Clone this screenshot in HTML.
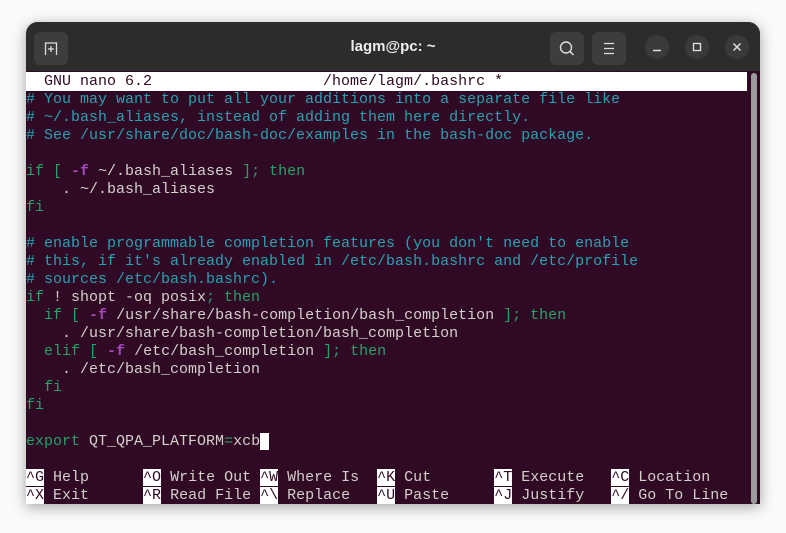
<!DOCTYPE html>
<html><head><style>
body{margin:0;width:786px;height:533px;background:#fafafa;overflow:hidden;position:relative;font-family:"Liberation Sans",sans-serif}
.win{position:absolute;left:26px;top:22px;width:734px;height:482px;background:#300a24;border-radius:12px 12px 0 0;box-shadow:0 3px 14px rgba(0,0,0,.35);overflow:hidden}
.tb{position:absolute;left:0;top:0;width:734px;height:49px;background:#2c2c2c}
.btn{position:absolute;top:10px;width:34px;height:33px;background:#3d3d3d;border-radius:6px}
.cir{position:absolute;top:13px;width:24px;height:24px;background:#3a3a3a;border-radius:50%}
.title{position:absolute;top:16px;left:0;width:734px;text-align:center;color:#eee;font-weight:bold;font-size:15px}
.term{position:absolute;left:0;top:51px;font-family:"Liberation Mono",monospace;font-size:15px;line-height:18px;color:#d3d0cc;white-space:pre}
.c{color:#2aa1b3}.k{color:#26a269}.p{color:#a347ba;font-weight:bold}
.hd{background:#fff;color:#300a24;width:721px;display:block;margin-top:-1px;padding-top:1px}
.kb{background:#fff;color:#300a24}
.sb{position:absolute;left:725px;top:51px;width:6px;height:431px;background:#9a9a9a;border-radius:3px}
</style></head><body>
<div class="win">
<div class="tb">
<div class="btn" style="left:8px"><svg width="34" height="33"><path d="M11.5 23V11h11v12" fill="none" stroke="#ddd" stroke-width="1.3"/><path d="M17 14v6M14 17h6" stroke="#ddd" stroke-width="1.3"/></svg></div>
<div class="title">lagm@pc: ~</div>
<div class="btn" style="left:524px"><svg width="34" height="33"><circle cx="16" cy="15.5" r="5.5" fill="none" stroke="#ddd" stroke-width="1.4"/><path d="M20 19.5l3.5 3.5" stroke="#ddd" stroke-width="1.5"/></svg></div>
<div class="btn" style="left:566px"><svg width="34" height="33"><path d="M12 11.5h10M12 16.5h10M12 21.5h10" stroke="#ddd" stroke-width="1.3"/></svg></div>
<div class="cir" style="left:619px"><svg width="24" height="24"><path d="M8 15.5h8" stroke="#ddd" stroke-width="1.5"/></svg></div>
<div class="cir" style="left:659px"><svg width="24" height="24"><rect x="8.5" y="8.5" width="7" height="7" fill="none" stroke="#ddd" stroke-width="1.4"/></svg></div>
<div class="cir" style="left:699px"><svg width="24" height="24"><path d="M8.5 8.5l7 7M15.5 8.5l-7 7" stroke="#ddd" stroke-width="1.5"/></svg></div>
</div>
<div class="term"><span class="hd">  GNU nano 6.2                   /home/lagm/.bashrc *                      </span><span class="c"># You may want to put all your additions into a separate file like
# ~/.bash_aliases, instead of adding them here directly.
# See /usr/share/doc/bash-doc/examples in the bash-doc package.</span>

<span class="k">if [</span> <span class="p">-f</span> ~/.bash_aliases <span class="k">]; then</span>
    . ~/.bash_aliases
<span class="k">fi</span>

<span class="c"># enable programmable completion features (you don't need to enable
# this, if it's already enabled in /etc/bash.bashrc and /etc/profile
# sources /etc/bash.bashrc).</span>
<span class="k">if</span> ! shopt -oq posix<span class="k">; then</span>
  <span class="k">if [</span> <span class="p">-f</span> /usr/share/bash-completion/bash_completion <span class="k">]; then</span>
    . /usr/share/bash-completion/bash_completion
  <span class="k">elif [</span> <span class="p">-f</span> /etc/bash_completion <span class="k">]; then</span>
    . /etc/bash_completion
  <span class="k">fi</span>
<span class="k">fi</span>

<span class="k">export</span> QT_QPA_PLATFORM<span class="k">=</span>xcb<span class="kb"> </span>

<span class="kb">^G</span> Help      <span class="kb">^O</span> Write Out <span class="kb">^W</span> Where Is  <span class="kb">^K</span> Cut       <span class="kb">^T</span> Execute   <span class="kb">^C</span> Location
<span class="kb">^X</span> Exit      <span class="kb">^R</span> Read File <span class="kb">^\</span> Replace   <span class="kb">^U</span> Paste     <span class="kb">^J</span> Justify   <span class="kb">^/</span> Go To Line</div>
<div class="sb"></div>
</div>
</body></html>
